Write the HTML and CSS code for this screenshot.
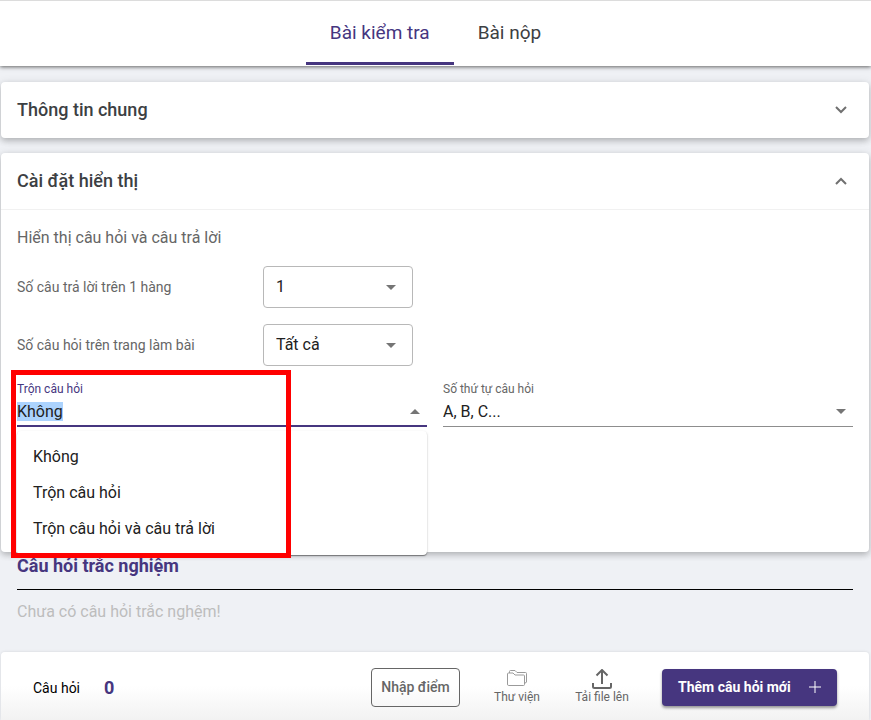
FILE: index.html
```html
<!DOCTYPE html>
<html lang="vi">
<head>
  <meta charset="UTF-8">
  <meta name="viewport" content="width=device-width, initial-scale=1.0">
  <title>Bài kiểm tra</title>
  <link rel="stylesheet" href="styles.css">
</head>
<body>
  <nav class="tabs">
    <a class="tab active" href="#exam">Bài kiểm tra</a>
    <a class="tab" href="#submissions">Bài nộp</a>
  </nav>

  <main>
    <section class="card">
      <button class="card-header" type="button" aria-expanded="false">
        Thông tin chung
        <svg class="chevron" viewBox="0 0 12 8"><path d="M1 1l5 5 5-5"/></svg>
      </button>
    </section>

    <section class="card">
      <button class="card-header" type="button" aria-expanded="true">
        Cài đặt hiển thị
        <svg class="chevron" viewBox="0 0 12 8"><path d="M1 7l5-5 5 5"/></svg>
      </button>
      <div class="card-body">
        <h2 class="body-title">Hiển thị câu hỏi và câu trả lời</h2>

        <div class="option-row">
          <label for="perRow">Số câu trả lời trên 1 hàng</label>
          <div class="outlined">
            <select id="perRow">
              <option>1</option>
              <option>2</option>
            </select>
            <svg class="arrow" viewBox="0 0 10 5"><path d="M0 0h10L5 5z"/></svg>
          </div>
        </div>

        <div class="option-row">
          <label for="perPage">Số câu hỏi trên trang làm bài</label>
          <div class="outlined">
            <select id="perPage">
              <option>Tất cả</option>
              <option>1</option>
            </select>
            <svg class="arrow" viewBox="0 0 10 5"><path d="M0 0h10L5 5z"/></svg>
          </div>
        </div>

        <div class="fields">
          <div class="field open">
            <label for="shuffle">Trộn câu hỏi</label>
            <div class="line">
              <input id="shuffle" type="text" value="Không" role="combobox" aria-expanded="true" aria-controls="shuffleMenu" autocomplete="off">
              <svg class="arrow" viewBox="0 0 10 5"><path d="M0 5h10L5 0z"/></svg>
            </div>
            <ul class="menu" id="shuffleMenu" role="listbox">
              <li role="option">Không</li>
              <li role="option">Trộn câu hỏi</li>
              <li role="option">Trộn câu hỏi và câu trả lời</li>
            </ul>
            <div class="highlight"></div>
          </div>
          <div class="field">
            <label for="numbering">Số thứ tự câu hỏi</label>
            <div class="line">
              <select id="numbering">
                <option>A, B, C...</option>
                <option>1, 2, 3...</option>
              </select>
              <svg class="arrow" viewBox="0 0 10 5"><path d="M0 0h10L5 5z"/></svg>
            </div>
          </div>
        </div>
      </div>
    </section>

    <section class="questions">
      <h2>Câu hỏi trắc nghiệm</h2>
      <p>Chưa có câu hỏi trắc nghệm!</p>
    </section>
  </main>

  <footer class="toolbar">
    <div class="summary">
      <span class="count-label">Câu hỏi</span>
      <strong class="count">0</strong>
    </div>
    <button class="btn-outline" type="button">Nhập điểm</button>
    <button class="btn-icon" type="button">
      <svg class="icon-folder" viewBox="0 0 20 18">
        <path d="M.5 15V5q0-1 1-1H6l2 2h8.500q1 0 1 1v8.500q0 1-1 1h-15q-1 0-1-1.500zM2.500 4V2.500q0-1 1-1H8l2 2h8.500q1 0 1 1V13q0 1-2 1"/>
      </svg>
      Thư viện
    </button>
    <button class="btn-icon" type="button">
      <svg class="icon-upload" viewBox="0 0 20 20">
        <path d="M10 15V1.500M4.500 6.500L10 1l5.500 5.500M1 14v3.500q0 1.500 1.500 1.500h15q1.500 0 1.500-1.500V14"/>
      </svg>
      Tải file lên
    </button>
    <button class="btn-main" type="button">
      Thêm câu hỏi mới
      <svg class="icon-plus" viewBox="0 0 12 12"><path d="M6 0v12M0 6h12"/></svg>
    </button>
  </footer>

  <script src="script.js"></script>
</body>
</html>
```
FILE: styles.css
```css
:root {
  --primary: #46367f;
  --bg: #eff1f5;
  --text-dark: #3c4043;
  --text: #212121;
  --text-light: #666;
  --shadow: 0 3px 6px rgba(0, 0, 0, 0.2), 0 1px 10px rgba(0, 0, 0, 0.1);
}

* {
  box-sizing: border-box;
  margin: 0;
  padding: 0;
}

body {
  font-family: Roboto, sans-serif;
  font-size: 16px;
  line-height: 24px;
  background: var(--bg);
  color: var(--text);
}

button, input, select {
  font: inherit;
  color: inherit;
  background: none;
  border: none;
  outline: none;
}

button {
  cursor: pointer;
}

svg {
  display: block;
  flex: none;
}

path {
  fill: none;
  stroke: currentColor;
}

.tabs {
  display: flex;
  justify-content: center;
  height: 66px;
  background: #fff;
  border-top: 1px solid #dcdcdc;
  box-shadow: 0 1px 4px rgba(0, 0, 0, 0.6);
}

.tab {
  height: 64px;
  padding: 20px 24px;
  font-size: 19px;
  color: var(--text-dark);
  text-decoration: none;
}

.tab.active {
  color: var(--primary);
  border-bottom: 3px solid var(--primary);
}

main {
  padding: 16px 2px 0 1px;
}

.card {
  margin-bottom: 15px;
  background: #fff;
  border-radius: 4px;
  box-shadow: var(--shadow);
}

.card-header {
  display: flex;
  align-items: center;
  justify-content: space-between;
  width: 100%;
  height: 56px;
  padding: 0 22px 0 16px;
  font-size: 18px;
  font-weight: 500;
  color: var(--text-dark);
}

.chevron {
  width: 12px;
  height: 8px;
  color: #707070;
}

.chevron path {
  stroke-width: 2;
}

.card-body {
  padding: 16px 16px 125px;
  border-top: 1px solid #f1f1f1;
}

.body-title {
  font-size: 16px;
  font-weight: 400;
  color: var(--text-light);
}

.option-row {
  display: flex;
  align-items: center;
  margin-top: 16px;
}

.option-row label {
  width: 246px;
  font-size: 14px;
  color: var(--text-light);
}

.outlined {
  display: flex;
  align-items: center;
  width: 150px;
  height: 42px;
  padding-right: 16px;
  border: 1px solid #b8b8b8;
  border-radius: 4px;
}

.outlined select,
.line select {
  appearance: none;
}

.outlined select {
  flex: 1;
  min-width: 0;
  height: 40px;
  padding-left: 12px;
}

.arrow {
  width: 10px;
  height: 5px;
}

.arrow path {
  fill: #757575;
  stroke: none;
}

.fields {
  display: grid;
  grid-template-columns: 1fr 1fr;
  gap: 16px;
  margin-top: 15px;
}

.field {
  position: relative;
}

.field label {
  display: block;
  font-size: 12px;
  line-height: 16px;
  color: var(--text-light);
}

.line {
  display: flex;
  align-items: center;
  height: 30px;
  padding-right: 7px;
  border-bottom: 1px solid #8d8d8d;
}

.line input,
.line select {
  flex: 1;
  min-width: 0;
  height: 28px;
  line-height: 19px;
}

.field.open label {
  color: var(--primary);
}

.field.open .line {
  border-bottom: 2px solid var(--primary);
}

.field input::selection {
  background: #acd3fd;
  color: var(--text);
}

.menu {
  position: absolute;
  top: 50px;
  left: 0;
  right: 0;
  z-index: 1;
  padding: 8px 0;
  list-style: none;
  background: #fff;
  border-radius: 4px;
  box-shadow: 0 1px 1px rgba(0, 0, 0, 0.4), 0 1px 3px rgba(0, 0, 0, 0.12);
}

.menu li {
  padding: 6px 16px;
}

/* red frame around the open menu */
.highlight {
  position: absolute;
  top: -11px;
  left: -6px;
  z-index: 2;
  width: 280px;
  height: 188px;
  border: 5px solid #f00;
  pointer-events: none;
}

.questions {
  padding: 0 16px 28px;
  margin-top: -15px;
}

.questions h2 {
  padding: 2px 0 11px;
  font-size: 18px;
  font-weight: 700;
  color: var(--primary);
  border-bottom: 1px solid #000;
}

.questions p {
  padding-top: 10px;
  color: #bdbdbd;
}

.toolbar {
  display: flex;
  align-items: center;
  gap: 32px;
  height: 68px;
  margin: 0 2px 0 1px;
  padding: 2px 32px 0;
  background: linear-gradient(#fff 50%, #f2f2f2);
  border-radius: 4px 4px 0 0;
  box-shadow: 0 0 3px rgba(0, 0, 0, 0.12);
}

.summary {
  display: flex;
  align-items: center;
  gap: 24px;
  margin-right: auto;
  padding-top: 2px;
}

.count-label {
  font-size: 14px;
  color: #000;
}

.count {
  font-size: 18px;
  color: var(--primary);
}

.btn-outline {
  height: 39px;
  min-width: 89px;
  font-size: 14px;
  font-weight: 500;
  color: var(--text-light);
  border: 1px solid #666;
  border-radius: 4px;
}

.btn-icon {
  display: flex;
  flex-direction: column;
  align-items: center;
  min-width: 50px;
  font-size: 12px;
  line-height: 17px;
  color: var(--text-light);
}

.btn-icon + .btn-icon {
  min-width: 56px;
}

.icon-folder {
  width: 20px;
  height: 18px;
  margin-bottom: 2px;
  color: #9a9a9a;
}

.icon-upload {
  width: 20px;
  height: 20px;
}

.icon-upload path {
  stroke-width: 2;
}

.btn-main {
  display: flex;
  align-items: center;
  justify-content: space-between;
  min-width: 175px;
  height: 37px;
  padding: 0 16px;
  font-size: 14px;
  font-weight: 700;
  color: #fff;
  background: var(--primary);
  border-radius: 4px;
  box-shadow: 0 2px 3px rgba(0, 0, 0, 0.4);
}

.icon-plus {
  width: 12px;
  height: 12px;
}
```
FILE: script.js
```js
const shuffle = document.getElementById('shuffle');
shuffle.focus();
shuffle.select();
```
